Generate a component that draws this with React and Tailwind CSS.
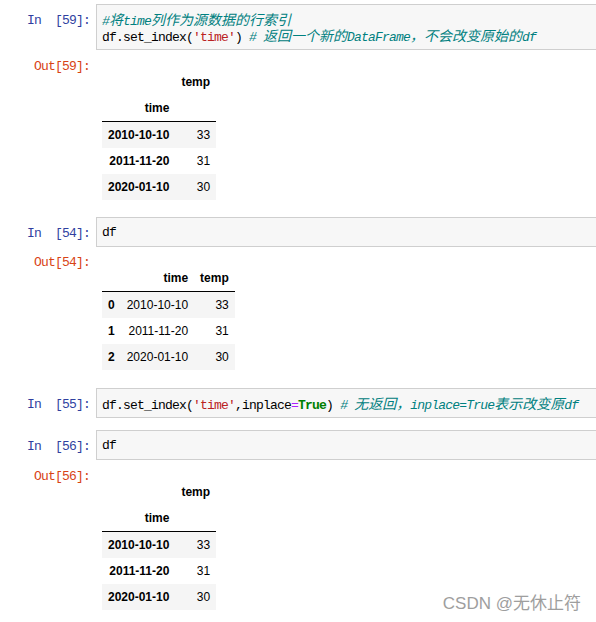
import React from 'react';

const mono = "font-['Liberation_Mono','Noto_Sans_CJK_SC',monospace] text-[13px] tracking-[-0.8px] leading-[16px]";

// CJK characters are full width (14px) next to 7px latin ones
const C = ({ children }) => (
  <span className="font-['Noto_Sans_CJK_SC',sans-serif] text-[14px] tracking-normal leading-none">{children}</span>
);
const Cm = ({ children }) => <span className="italic text-[#008080]">{children}</span>;
const S = ({ children }) => <span className="text-[#BA2121]">{children}</span>;
const Line = ({ children }) => <div className="h-[16px] whitespace-pre">{children}</div>;

const InCell = ({ n, className = '', children }) => (
  <div className={`flex ${className}`}>
    <div className={`w-[96px] shrink-0 pr-[6px] pt-[9px] text-right text-[#303F9F] whitespace-pre ${mono}`}>
      {`In  [${n}]:`}
    </div>
    <div className={`flex-1 mr-[-10px] border border-[#cfcfcf] bg-[#f7f7f7] px-[5px] pt-[7px] pb-[5px] text-black ${mono}`}>
      {children}
    </div>
  </div>
);

const OutCell = ({ n, className = '', children }) => (
  <div className={`flex ${className}`}>
    <div className={`w-[96px] shrink-0 pr-[6px] pt-[1px] text-right text-[#D84315] whitespace-pre ${mono}`}>
      {`Out[${n}]:`}
    </div>
    <div className="pt-[11px] pl-[6px]">{children}</div>
  </div>
);

const rows = [
  ['0', '2010-10-10', '33'],
  ['1', '2011-11-20', '31'],
  ['2', '2020-01-10', '30'],
];

const cell = 'px-[6px] py-[6px] leading-[14px] text-right whitespace-nowrap';

const IndexedTable = () => (
  <table className="border-collapse font-['Liberation_Sans',Arial,sans-serif] text-[12px] text-black">
    <thead className="border-b border-black">
      <tr>
        <th className={cell}></th>
        <th className={`${cell} font-bold`}>temp</th>
      </tr>
      <tr>
        <th className={`${cell} font-bold`}>time</th>
        <th className={cell}></th>
      </tr>
    </thead>
    <tbody>
      {rows.map((r, i) => (
        <tr key={i} className={i % 2 === 0 ? 'bg-[#f5f5f5]' : ''}>
          <th className={`${cell} font-bold`}>{r[1]}</th>
          <td className={cell}>{r[2]}</td>
        </tr>
      ))}
    </tbody>
  </table>
);

const PlainTable = () => (
  <table className="border-collapse font-['Liberation_Sans',Arial,sans-serif] text-[12px] text-black">
    <thead className="border-b border-black">
      <tr>
        <th className={cell}></th>
        <th className={`${cell} font-bold`}>time</th>
        <th className={`${cell} font-bold`}>temp</th>
      </tr>
    </thead>
    <tbody>
      {rows.map((r, i) => (
        <tr key={i} className={i % 2 === 0 ? 'bg-[#f5f5f5]' : ''}>
          <th className={`${cell} font-bold`}>{r[0]}</th>
          <td className={cell}>{r[1]}</td>
          <td className={cell}>{r[2]}</td>
        </tr>
      ))}
    </tbody>
  </table>
);

export default function App() {
  return (
    <div className="relative h-[622px] w-full overflow-hidden bg-white pt-[4px]">
      <InCell n="59">
        <Line>
          <Cm>#<C>将</C>time<C>列作为源数据的行索引</C></Cm>
        </Line>
        <Line>
          df.set_index(<S>'time'</S>) <Cm># <C>返回一个新的</C>DataFrame<C>，不会改变原始的</C>df</Cm>
        </Line>
      </InCell>
      <OutCell n="59" className="mt-[8px]">
        <IndexedTable />
      </OutCell>

      <InCell n="54" className="mt-[17px]">
        <Line>df</Line>
      </InCell>
      <OutCell n="54" className="mt-[7px]">
        <PlainTable />
      </OutCell>

      <InCell n="55" className="mt-[18px]">
        <Line>
          df.set_index(<S>'time'</S>,inplace<span className="text-[#AA22FF]">=</span>
          <span className="font-bold text-[#008000]">True</span>){' '}
          <Cm># <C>无返回，</C>inplace=True<C>表示改变原</C>df</Cm>
        </Line>
      </InCell>

      <InCell n="56" className="mt-[12px]">
        <Line>df</Line>
      </InCell>
      <OutCell n="56" className="mt-[8px]">
        <IndexedTable />
      </OutCell>

      <div className="absolute right-[15px] bottom-[9px] font-['Liberation_Sans','Noto_Sans_CJK_SC',sans-serif] text-[17px] leading-[18px] text-[#9e9e9e]">
        CSDN @无休止符
      </div>
    </div>
  );
}
